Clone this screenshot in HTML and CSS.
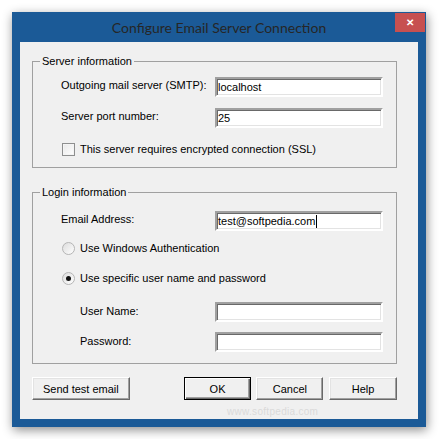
FILE: index.html
```html
<!DOCTYPE html>
<html lang="en">
<head>
    <meta charset="UTF-8">
    <title>Configure Email Server Connection</title>
    <link rel="stylesheet" href="styles.css">
</head>
<body>
    <div class="window">
        <div class="titlebar">
            <span class="title">Configure Email Server Connection</span>
            <span class="close">&#x2715;</span>
        </div>

        <div class="client">
            <fieldset class="group group-server">
                <legend>Server information</legend>
                <div class="row row-first">
                    <label class="label">Outgoing mail server (SMTP):</label>
                    <input class="field" type="text" value="localhost">
                </div>
                <div class="row">
                    <label class="label">Server port number:</label>
                    <input class="field" type="text" value="25">
                </div>
                <div class="row option">
                    <span class="check"></span>
                    <span>This server requires encrypted connection (SSL)</span>
                </div>
            </fieldset>

            <fieldset class="group group-login">
                <legend>Login information</legend>
                <div class="row row-email">
                    <label class="label">Email Address:</label>
                    <div class="field">test@softpedia.com<span class="caret"></span></div>
                </div>
                <div class="row option row-radio1">
                    <span class="radio"></span>
                    <span>Use Windows Authentication</span>
                </div>
                <div class="row option">
                    <span class="radio selected"></span>
                    <span>Use specific user name and password</span>
                </div>
                <div class="row row-user">
                    <label class="label sub">User Name:</label>
                    <input class="field" type="text" value="">
                </div>
                <div class="row">
                    <label class="label sub">Password:</label>
                    <input class="field" type="password" value="">
                </div>
            </fieldset>

            <div class="buttons">
                <button class="btn btn-send">Send test email</button>
                <button class="btn btn-default">OK</button>
                <button class="btn btn-cancel">Cancel</button>
                <button class="btn btn-help">Help</button>
            </div>

            <span class="watermark">www.softpedia.com</span>
        </div>
    </div>
</body>
</html>
```

FILE: styles.css
```css
body {
    margin: 0;
    background-color: #ffffff;
    font-family: "Liberation Sans", Arial, sans-serif;
    font-size: 11px;
    color: #000;
}

.window {
    margin: 12px;
    width: 398px;
    padding: 0 8px 8px;
    background-color: #1b5a97;
    box-shadow: 1px 3px 10px rgba(0,0,0,0.45);
}

.titlebar {
    position: relative;
    height: 30px;
    display: flex;
    align-items: center;
    justify-content: center;
}

.title {
    font-family: Lato, "Noto Sans", sans-serif;
    font-size: 14px;
    color: #262626;
    margin-top: 1px;
}

.close {
    position: absolute;
    top: 1px;
    right: -7px;
    width: 30px;
    height: 19px;
    background-color: #c75050;
    color: #fff;
    font-size: 10px;
    font-weight: bold;
    display: flex;
    align-items: center;
    justify-content: center;
}

.client {
    position: relative;
    background-color: #f0f0f0;
    height: 377px;
    padding: 13px 21px 0 12px;
    box-sizing: border-box;
}

.group {
    margin: 0;
    padding: 0 13px 8px 28px;
    border: 1px solid #a0a0a0;
    min-inline-size: 0;
}

.group legend {
    padding: 0 2px;
    margin-left: -21px;
    line-height: 13px;
}

.group-login {
    margin-top: 18px;
    padding-bottom: 11px;
}

.row {
    display: flex;
    align-items: center;
    height: 20px;
    margin-top: 11px;
}

.row-first {
    margin-top: 9px;
}

.row-email {
    margin-top: 12px;
}

.row-radio1 {
    margin-top: 7px;
    height: 20px;
}

.row-radio1 + .row {
    margin-top: 10px;
}

.row-user {
    margin-top: 14px;
}

.row-user + .row {
    margin-top: 10px;
}

.label {
    width: 154px;
    flex: none;
    margin-top: -5px;
}

.label.sub {
    width: 135px;
    padding-left: 19px;
    margin-top: -3px;
}

.field {
    box-sizing: border-box;
    width: 168px;
    height: 20px;
    margin: 0;
    padding: 0 1px;
    font-family: "Liberation Sans", Arial, sans-serif;
    font-size: 11px;
    color: #000;
    background-color: #fff;
    border: 2px solid;
    border-color: #a0a0a0 #fff #fff #a0a0a0;
    box-shadow: inset 1px 1px 0 #696969, inset -1px -1px 0 #e3e3e3;
    outline: none;
    display: flex;
    align-items: center;
}

.caret {
    display: inline-block;
    width: 1px;
    height: 13px;
    background-color: #000;
    margin-left: 1px;
}

.option {
    gap: 5px;
    margin-left: 1px;
}

.check {
    width: 11px;
    height: 11px;
    border: 1px solid #8e8f8f;
    background: linear-gradient(135deg, #e8e8e8, #ffffff);
    box-shadow: inset 0 0 0 1px #f4f4f4;
}

.radio {
    position: relative;
    width: 11px;
    height: 11px;
    border: 1px solid #b5b5b5;
    border-radius: 50%;
    background: linear-gradient(135deg, #dcdcdc, #ffffff);
}

.radio.selected::after {
    content: "";
    position: absolute;
    left: 3px;
    top: 3px;
    width: 5px;
    height: 5px;
    border-radius: 50%;
    background-color: #111;
}

.buttons {
    display: flex;
    margin-top: 13px;
}

.btn {
    box-sizing: border-box;
    height: 23px;
    padding: 0;
    font-family: "Liberation Sans", Arial, sans-serif;
    font-size: 11px;
    color: #000;
    background-color: #f0f0f0;
    border: 1px solid;
    border-color: #fff #696969 #696969 #fff;
    box-shadow: inset -1px -1px 0 #a0a0a0, inset 1px 1px 0 #e3e3e3;
}

.btn-send {
    width: 98px;
}

.btn-default {
    width: 68px;
    margin-left: 54px;
    border: 1px solid #000;
    box-shadow: inset 1px 1px 0 #fff, inset -1px -1px 0 #696969, inset -2px -2px 0 #a0a0a0;
}

.btn-cancel {
    width: 67px;
    margin-left: 5px;
}

.btn-help {
    width: 68px;
    margin-left: 6px;
}

.watermark {
    position: absolute;
    left: 207px;
    bottom: 2px;
    font-size: 10px;
    letter-spacing: 0.3px;
    color: #dadada;
}
```
